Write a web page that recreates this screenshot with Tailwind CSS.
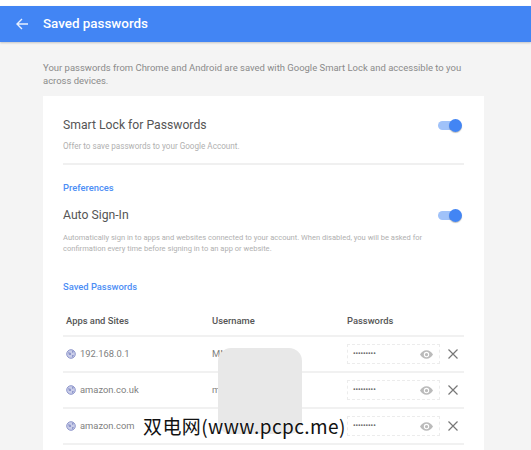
<!DOCTYPE html>
<html lang="en">
<head>
    <meta charset="UTF-8">
    <title>Saved passwords</title>
    <script src="https://cdn.jsdelivr.net/npm/@tailwindcss/browser@4"></script>
</head>
<body class="relative h-[450px] w-[531px] overflow-hidden bg-[#f4f4f4] font-['Roboto','Liberation_Sans',sans-serif]">
    <!-- Top bar -->
    <div class="h-[6px] bg-white"></div>
    <header class="flex h-[36px] items-center bg-[#4285f4] shadow-[0_1px_2px_rgba(0,0,0,0.2)]">
        <svg class="ml-[15px] h-[14px] w-[14px]" viewBox="0 0 14 14" fill="none" stroke="#e8f0fe" stroke-width="1.4">
            <path d="M13 7H2M7 2L2 7l5 5"/>
        </svg>
        <h1 class="ml-[14px] text-[13.4px] font-medium text-white">Saved passwords</h1>
    </header>

    <p class="mt-[19px] ml-[43px] w-[440px] text-[9.48px] leading-[13px] text-[#8a8a8a]">Your passwords from Chrome and Android are saved with Google Smart Lock and accessible to you across devices.</p>

    <!-- Card -->
    <main class="mt-[9px] ml-[43px] h-[360px] w-[441px] overflow-hidden bg-white px-[20px] pt-[21px]">
        <div class="flex h-[48px] justify-between border-b-2 border-[#f0f0f0]">
            <div>
                <h2 class="text-[12.2px] leading-[16px] text-[#555]">Smart Lock for Passwords</h2>
                <p class="mt-[8px] text-[8.15px] leading-[10px] text-[#b0b0b0]">Offer to save passwords to your Google Account.</p>
            </div>
            <div class="relative mt-[2px] mr-[2px] h-[13px] w-[24px]">
                <div class="absolute top-[2px] left-0 h-[9px] w-[18px] rounded-full bg-[#a0c2f9]"></div>
                <div class="absolute top-0 right-0 h-[13px] w-[13px] rounded-full bg-[#4285f4] shadow-[0_1px_1px_rgba(0,0,0,0.25)]"></div>
            </div>
        </div>

        <h3 class="mt-[17px] text-[9.4px] leading-[11px] font-medium text-[#4d8ef5]">Preferences</h3>

        <div class="mt-[14px] flex justify-between">
            <h2 class="text-[12.2px] leading-[16px] text-[#555]">Auto Sign-In</h2>
            <div class="relative mt-[2px] mr-[2px] h-[13px] w-[24px]">
                <div class="absolute top-[2px] left-0 h-[9px] w-[18px] rounded-full bg-[#a0c2f9]"></div>
                <div class="absolute top-0 right-0 h-[13px] w-[13px] rounded-full bg-[#4285f4] shadow-[0_1px_1px_rgba(0,0,0,0.25)]"></div>
            </div>
        </div>
        <p class="mt-[9px] w-[395px] text-[7.55px] leading-[11px] text-[#b0b0b0]">Automatically sign in to apps and websites connected to your account. When disabled, you will be asked for confirmation every time before signing in to an app or website.</p>

        <h3 class="mt-[27px] text-[9.4px] leading-[11px] font-medium text-[#4d8ef5]">Saved Passwords</h3>

        <!-- Table -->
        <div class="mt-[15px] flex h-[30px] items-center border-b-2 border-[#f1f1f1] text-[9.4px] font-medium text-[#555]">
            <span class="ml-[3px] w-[146px]">Apps and Sites</span>
            <span class="w-[135px]">Username</span>
            <span>Passwords</span>
        </div>

        <div class="flex h-[36px] items-center border-b-2 border-[#f1f1f1]">
            <svg class="ml-[3px] h-[10px] w-[10px] shrink-0" viewBox="0 0 10 10"><circle cx="5" cy="5" r="4.3" fill="#c9cde8" stroke="#8f97cc" stroke-width="1"/><path d="M2 3l3 1 0 2-2 0zM6 1l2 2-2 1zM6 6l2 0-2 3z" fill="#8f97cc"/></svg>
            <span class="ml-[4px] w-[132px] text-[9.4px] text-[#808080]">192.168.0.1</span>
            <span class="w-[135px] text-[9.4px] text-[#808080]">MN</span>
            <div class="flex h-[20px] w-[93px] items-center border border-dashed border-[#ececec] px-[5px]">
                <span class="flex-1 text-[7px] leading-none font-bold text-[#666]">•••••••••</span>
                <svg class="mr-[1px] h-[9px] w-[13px]" viewBox="0 0 24 16" fill="#bbb"><path d="M12 0C7 0 2.700 3.300 0 8c2.700 4.700 7 8 12 8s9.300-3.300 12-8c-2.700-4.700-7-8-12-8zm0 13a5 5 0 1 1 0-10 5 5 0 0 1 0 10zm0-8a3 3 0 1 0 0 6 3 3 0 0 0 0-6z"/></svg>
            </div>
            <svg class="ml-[8px] h-[10px] w-[10px]" viewBox="0 0 10 10" fill="none" stroke="#777" stroke-width="1.2"><path d="M.5.5l9 9M9.500.5l-9 9"/></svg>
        </div>

        <div class="flex h-[36px] items-center border-b-2 border-[#f1f1f1]">
            <svg class="ml-[3px] h-[10px] w-[10px] shrink-0" viewBox="0 0 10 10"><circle cx="5" cy="5" r="4.3" fill="#c9cde8" stroke="#8f97cc" stroke-width="1"/><path d="M2 3l3 1 0 2-2 0zM6 1l2 2-2 1zM6 6l2 0-2 3z" fill="#8f97cc"/></svg>
            <span class="ml-[4px] w-[132px] text-[9.4px] text-[#808080]">amazon.co.uk</span>
            <span class="w-[135px] text-[9.4px] text-[#808080]">m</span>
            <div class="flex h-[20px] w-[93px] items-center border border-dashed border-[#ececec] px-[5px]">
                <span class="flex-1 text-[7px] leading-none font-bold text-[#666]">•••••••••</span>
                <svg class="mr-[1px] h-[9px] w-[13px]" viewBox="0 0 24 16" fill="#bbb"><path d="M12 0C7 0 2.700 3.300 0 8c2.700 4.700 7 8 12 8s9.300-3.300 12-8c-2.700-4.700-7-8-12-8zm0 13a5 5 0 1 1 0-10 5 5 0 0 1 0 10zm0-8a3 3 0 1 0 0 6 3 3 0 0 0 0-6z"/></svg>
            </div>
            <svg class="ml-[8px] h-[10px] w-[10px]" viewBox="0 0 10 10" fill="none" stroke="#777" stroke-width="1.2"><path d="M.5.5l9 9M9.500.5l-9 9"/></svg>
        </div>

        <div class="flex h-[36px] items-center border-b-2 border-[#f1f1f1]">
            <svg class="ml-[3px] h-[10px] w-[10px] shrink-0" viewBox="0 0 10 10"><circle cx="5" cy="5" r="4.3" fill="#c9cde8" stroke="#8f97cc" stroke-width="1"/><path d="M2 3l3 1 0 2-2 0zM6 1l2 2-2 1zM6 6l2 0-2 3z" fill="#8f97cc"/></svg>
            <span class="ml-[4px] w-[132px] text-[9.4px] text-[#808080]">amazon.com</span>
            <span class="w-[135px] text-[9.4px] text-[#808080]"></span>
            <div class="flex h-[20px] w-[93px] items-center border border-dashed border-[#ececec] px-[5px]">
                <span class="flex-1 text-[7px] leading-none font-bold text-[#666]">•••••••••</span>
                <svg class="mr-[1px] h-[9px] w-[13px]" viewBox="0 0 24 16" fill="#bbb"><path d="M12 0C7 0 2.700 3.300 0 8c2.700 4.700 7 8 12 8s9.300-3.300 12-8c-2.700-4.700-7-8-12-8zm0 13a5 5 0 1 1 0-10 5 5 0 0 1 0 10zm0-8a3 3 0 1 0 0 6 3 3 0 0 0 0-6z"/></svg>
            </div>
            <svg class="ml-[8px] h-[10px] w-[10px]" viewBox="0 0 10 10" fill="none" stroke="#777" stroke-width="1.2"><path d="M.5.5l9 9M9.500.5l-9 9"/></svg>
        </div>
    </main>

    <!-- Watermark sits over the table -->
    <div class="absolute top-[348px] left-[218px] h-[86px] w-[84px] rounded-[13px] bg-[#e8e8e8]"></div>
    <div class="absolute top-[414px] left-[143px] text-[19px] leading-[24px] tracking-[0.4px] whitespace-nowrap text-[#111] [text-shadow:0_0_2px_white] font-['Noto_Sans_CJK_SC','Liberation_Sans',sans-serif]">双电网(www.pcpc.me)</div>
</body>
</html>
